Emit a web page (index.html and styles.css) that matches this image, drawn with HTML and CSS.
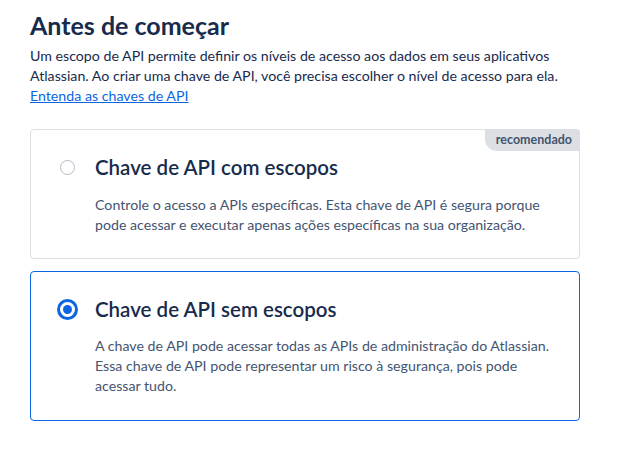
FILE: index.html
```html
<!DOCTYPE html>
<html lang="pt-BR">
<head>
<meta charset="utf-8">
<link rel="stylesheet" href="styles.css">
</head>
<body>
<main class="page">
  <h1 class="title">Antes de começar</h1>
  <p class="intro">Um escopo de API permite definir os níveis de acesso aos dados em seus aplicativos Atlassian. Ao criar uma chave de API, você precisa escolher o nível de acesso para ela.<br><a href="#" class="link">Entenda as chaves de API</a></p>

  <div class="options">
    <label class="card">
      <span class="badge">recomendado</span>
      <span class="card-head">
        <span class="radio-col"><span class="radio"></span></span>
        <span class="card-title">Chave de API com escopos</span>
      </span>
      <span class="card-desc">Controle o acesso a APIs específicas. Esta chave de API é segura porque pode acessar e executar apenas ações específicas na sua organização.</span>
    </label>

    <label class="card card-selected">
      <span class="card-head">
        <span class="radio-col"><span class="radio radio-checked"></span></span>
        <span class="card-title">Chave de API sem escopos</span>
      </span>
      <span class="card-desc">A chave de API pode acessar todas as APIs de administração do Atlassian. Essa chave de API pode representar um risco à segurança, pois pode acessar tudo.</span>
    </label>
  </div>
</main>
</body>
</html>
```

FILE: styles.css
```css
* { box-sizing: border-box; }
html, body { margin: 0; padding: 0; background: #ffffff; }
body {
  font-family: "Lato", "Noto Sans", sans-serif;
  color: #172b4d;
}
.page {
  width: 550px;
  margin-left: 30px;
  padding-top: 9px;
}
.title {
  margin: 0;
  font-size: 25px;
  line-height: 32px;
  font-weight: 700;
  color: #172b4d;
}
.intro {
  margin: 5px 0 0;
  font-size: 14.2px;
  line-height: 20px;
  color: #172b4d;
}
.link {
  color: #0c66e4;
  text-decoration: underline;
}
.options {
  margin-top: 23px;
  display: flex;
  flex-direction: column;
  gap: 12px;
}
.card {
  position: relative;
  display: flex;
  flex-direction: column;
  border: 1px solid #dcdfe4;
  border-radius: 4px;
  padding: 25px 14px 23px 28px;
  background: #fff;
}
.card-selected {
  border-color: #0c66e4;
  padding-bottom: 24px;
}
.badge {
  position: absolute;
  top: -1px;
  right: -1px;
  background: #dcdfe4;
  color: #44546f;
  font-size: 12.5px;
  font-weight: 700;
  line-height: 22px;
  padding: 0 8px 0 11px;
  border-radius: 0 4px 0 12px;
}
.card-head {
  display: flex;
  align-items: center;
}
.radio-col {
  width: 16px;
  margin-right: 20px;
  display: flex;
  justify-content: center;
}
.radio {
  display: block;
  flex: none;
  width: 15px;
  height: 15px;
  border: 1px solid #b3b9c4;
  border-radius: 50%;
  background: #fff;
}
.radio-checked {
  width: 21px;
  height: 21px;
  border: 3px solid #0c66e4;
  position: relative;
}
.radio-checked::after {
  content: "";
  position: absolute;
  left: 3px;
  top: 3px;
  width: 9px;
  height: 9px;
  border-radius: 50%;
  background: #0c66e4;
}
.card-title {
  font-size: 20.5px;
  line-height: 24px;
  font-weight: 600;
  color: #172b4d;
}
.card-desc {
  margin: 16px 0 0 36px;
  font-size: 14.2px;
  line-height: 20px;
  color: #44546f;
}
.card-selected .card-desc { margin-top: 15px; }
```
